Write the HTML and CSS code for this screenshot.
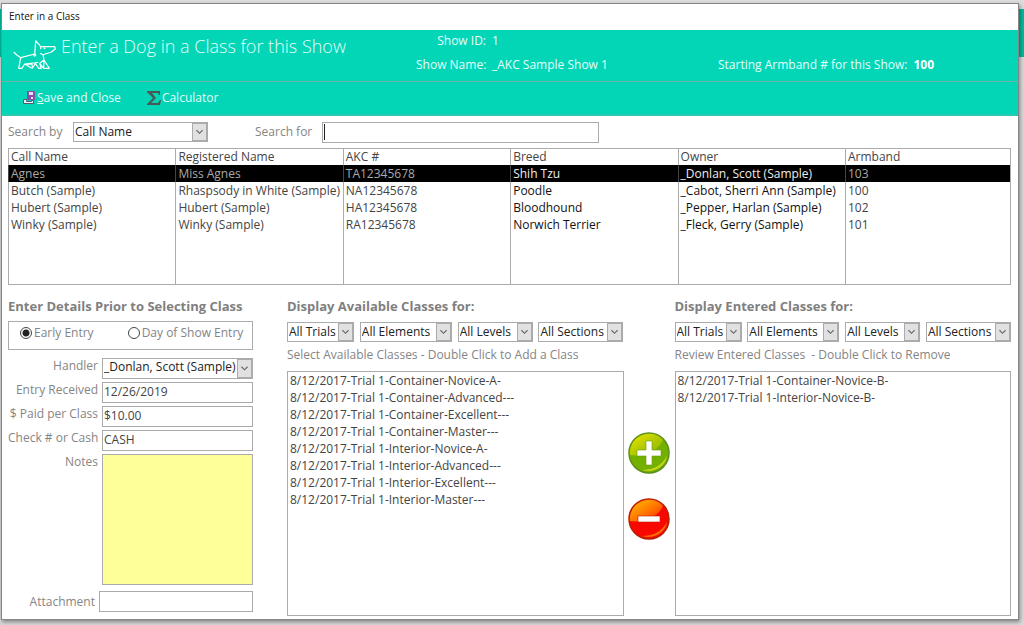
FILE: index.html
```html
<!DOCTYPE html>
<html lang="en">
<head>
  <meta charset="UTF-8">
  <title>Enter in a Class</title>
  <meta name="viewport" content="width=device-width, initial-scale=1.0">
  <link rel="stylesheet" href="styles.css">
</head>
<body>

  <svg class="defs" aria-hidden="true">
    <symbol id="arrow" viewBox="0 0 15 18">
      <path d="M4 7l3.500 3.500L11 7" fill="none" stroke="#666" stroke-width="1.300"/>
    </symbol>
  </svg>

  <div class="window">
    <div class="title-bar">Enter in a Class</div>

    <header class="banner">
      <svg class="dog" viewBox="0 0 44 32" fill="none" stroke="#fff" stroke-width="1.200" stroke-linejoin="round" stroke-linecap="round">
        <path d="M1 13.300l2.500 2.400 4.200 3L21.700 15l1-13.300 5 6h14l.7 2-4 3.300-8.300 2.700-2.600-1.200M27.700 7.700v2"/>
        <path d="M7.700 18.700l-2 10.600H9l2.700-4.300 6.600 4h1.200l-.5-4-7.300.2M19.500 29l3.200-5M11.700 25l13-1.500M30.100 15.700L31 21l5.300 8.300h-5.600l-4-5 1.600 5h-2.600l-3-4.500M30.700 29.300L31 21l-4.300 3.300"/>
        <circle cx="21.700" cy="16" r="1"/>
        <circle cx="31.500" cy="9.300" r=".4"/>
      </svg>
      <h1>Enter a Dog in a Class for this Show</h1>
      <dl class="show-info">
        <dt>Show ID:</dt><dd>1</dd>
        <dt>Show Name:</dt><dd>_AKC Sample Show 1</dd>
      </dl>
      <dl class="armband">
        <dt>Starting Armband # for this Show:</dt><dd>100</dd>
      </dl>
    </header>

    <nav class="toolbar">
      <button type="button">
        <svg width="14" height="14" viewBox="0 0 14 14">
          <path d="M5 0h8v9H5z" fill="#8350ad"/>
          <path d="M7 1h4v3H7zM9 6h2v2H9z" fill="#e9e0f2"/>
          <path d="M1.500 8.500h3v2h5v-1h2v3h-10z" fill="#dff" stroke="#5b5570"/>
        </svg>
        <span><u>S</u>ave and Close</span>
      </button>
      <button type="button">
        <svg width="14" height="14" viewBox="0 0 14 14">
          <path d="M0 0h13v4h-1l-1-2H5l4 5-5 5h7l2-3h1l-1 5H0v-1l6-6-6-6z" fill="#4d5656"/>
        </svg>
        <span>Calculator</span>
      </button>
    </nav>

    <main>
      <div class="search">
        <label for="search-by">Search by</label>
        <span class="combo">
          <select id="search-by"><option>Call Name</option></select>
          <svg><use href="#arrow"/></svg>
        </span>
        <label class="for" for="search-for">Search for</label>
        <span class="search-box"><input id="search-for" type="text"></span>
      </div>

      <table class="dogs">
        <thead>
          <tr><th>Call Name</th><th>Registered Name</th><th>AKC #</th><th>Breed</th><th>Owner</th><th class="last">Armband</th></tr>
        </thead>
        <tbody>
          <tr class="selected"><td>Agnes</td><td>Miss Agnes</td><td>TA12345678</td><td class="strong">Shih Tzu</td><td class="strong">_Donlan, Scott (Sample)</td><td>103</td></tr>
          <tr><td>Butch (Sample)</td><td>Rhaspsody in White (Sample)</td><td>NA12345678</td><td class="strong">Poodle</td><td class="strong">_Cabot, Sherri Ann (Sample)</td><td>100</td></tr>
          <tr><td>Hubert (Sample)</td><td>Hubert (Sample)</td><td>HA12345678</td><td class="strong">Bloodhound</td><td class="strong">_Pepper, Harlan (Sample)</td><td>102</td></tr>
          <tr><td>Winky (Sample)</td><td>Winky (Sample)</td><td>RA12345678</td><td class="strong">Norwich Terrier</td><td class="strong">_Fleck, Gerry (Sample)</td><td>101</td></tr>
          <tr class="rest"><td></td><td></td><td></td><td></td><td></td><td></td></tr>
        </tbody>
      </table>

      <div class="panels">
        <section class="details">
          <h2>Enter Details Prior to Selecting Class</h2>
          <div class="entry-type" role="radiogroup">
            <label><input type="radio" name="entry" checked> Early Entry</label>
            <label><input type="radio" name="entry"> Day of Show Entry</label>
          </div>
          <div class="fields">
            <label for="handler">Handler</label>
            <span class="combo">
              <select id="handler"><option>_Donlan, Scott (Sample)</option></select>
              <svg><use href="#arrow"/></svg>
            </span>
            <label for="received">Entry Received</label>
            <input id="received" type="text" value="12/26/2019">
            <label for="paid">$ Paid per Class</label>
            <input id="paid" type="text" value="$10.00">
            <label for="check">Check # or Cash</label>
            <input id="check" type="text" value="CASH">
            <label for="notes">Notes</label>
            <textarea id="notes"></textarea>
          </div>
          <div class="attachment">
            <label for="attachment">Attachment</label>
            <input id="attachment" type="text">
          </div>
        </section>

        <section class="classes">
          <h2>Display Available Classes for:</h2>
          <div class="filters">
            <span class="combo trials"><select aria-label="Trials"><option>All Trials</option></select><svg><use href="#arrow"/></svg></span>
            <span class="combo elements"><select aria-label="Elements"><option>All Elements</option></select><svg><use href="#arrow"/></svg></span>
            <span class="combo levels"><select aria-label="Levels"><option>All Levels</option></select><svg><use href="#arrow"/></svg></span>
            <span class="combo sections"><select aria-label="Sections"><option>All Sections</option></select><svg><use href="#arrow"/></svg></span>
          </div>
          <label for="available">Select Available Classes - Double Click to Add a Class</label>
          <select id="available" class="list" size="8">
            <option>8/12/2017-Trial 1-Container-Novice-A-</option>
            <option>8/12/2017-Trial 1-Container-Advanced---</option>
            <option>8/12/2017-Trial 1-Container-Excellent---</option>
            <option>8/12/2017-Trial 1-Container-Master---</option>
            <option>8/12/2017-Trial 1-Interior-Novice-A-</option>
            <option>8/12/2017-Trial 1-Interior-Advanced---</option>
            <option>8/12/2017-Trial 1-Interior-Excellent---</option>
            <option>8/12/2017-Trial 1-Interior-Master---</option>
          </select>
        </section>

        <div class="move">
          <button type="button" aria-label="Add class">
            <svg width="42" height="42" viewBox="0 0 42 42">
              <defs>
                <linearGradient id="green" x1="0" y1="0" x2="1" y2="1">
                  <stop offset="0" stop-color="#f0e800"/><stop offset=".5" stop-color="#b4ca00"/><stop offset="1" stop-color="#7fb800"/>
                </linearGradient>
              </defs>
              <circle cx="21" cy="21" r="20" fill="#74b000" stroke="#5c8f1c" stroke-width="1.500"/>
              <path d="M2 23A19 19 0 0 1 35 8C30 19 17 25 2 23z" fill="url(#green)"/>
              <path d="M14 38C26 38 34 33 39 24 38 34 26 42 14 38z" fill="#c5d51c"/>
              <path d="M18 9h6v9h9v6h-9v9h-6v-9H9v-6h9z" fill="#fff" stroke="#6a9a10" stroke-width=".6"/>
            </svg>
          </button>
          <button type="button" aria-label="Remove class">
            <svg width="42" height="42" viewBox="0 0 42 42">
              <defs>
                <linearGradient id="red" x1="0" y1="0" x2="1" y2="1">
                  <stop offset="0" stop-color="#ffc400"/><stop offset=".6" stop-color="#ff6a00"/><stop offset="1" stop-color="#f51800"/>
                </linearGradient>
              </defs>
              <circle cx="21" cy="21" r="20" fill="#f80800" stroke="#b81e08" stroke-width="1.500"/>
              <path d="M2 23A19 19 0 0 1 35 8C30 19 17 25 2 23z" fill="url(#red)"/>
              <path d="M14 38C26 38 34 33 39 24 38 34 26 42 14 38z" fill="#ff6c00"/>
              <path d="M10 18h22v6H10z" fill="#fff" stroke="#c21800" stroke-width=".6"/>
            </svg>
          </button>
        </div>

        <section class="classes">
          <h2>Display Entered Classes for:</h2>
          <div class="filters">
            <span class="combo trials"><select aria-label="Trials"><option>All Trials</option></select><svg><use href="#arrow"/></svg></span>
            <span class="combo elements"><select aria-label="Elements"><option>All Elements</option></select><svg><use href="#arrow"/></svg></span>
            <span class="combo levels"><select aria-label="Levels"><option>All Levels</option></select><svg><use href="#arrow"/></svg></span>
            <span class="combo sections"><select aria-label="Sections"><option>All Sections</option></select><svg><use href="#arrow"/></svg></span>
          </div>
          <label for="entered">Review Entered Classes &nbsp;- Double Click to Remove</label>
          <select id="entered" class="list" size="8">
            <option>8/12/2017-Trial 1-Container-Novice-B-</option>
            <option>8/12/2017-Trial 1-Interior-Novice-B-</option>
          </select>
        </section>
      </div>
    </main>
  </div>

</body>
</html>
```
FILE: styles.css
```css
:root{
  --teal:#03d5b7;--line:#ababab;--label:#858585;--text:#444
}
*{box-sizing:border-box;margin:0;padding:0}
body{
  font:12px/16px "Open Sans",sans-serif;color:var(--text);
  min-height:100vh;display:flex;padding:3px 5px 5px 1px;
  background:linear-gradient(#dcdcdc 9px,#00b89c 9px,#00b89c 57px,#d8d8d8 57px)
}
input,select,textarea,button{font:inherit;color:inherit;border-radius:0;outline:none}
.defs{position:absolute;width:0;height:0}
.window{
  flex:1;display:flex;flex-direction:column;background:#fff;
  border:1px solid #858585;box-shadow:1px 2px 4px rgba(0,0,0,.4)
}
.title-bar{height:26px;padding:4px 7px;font-size:10px;line-height:16px;color:#111}

/* Banner */
.banner{
  height:52px;display:flex;background:var(--teal);color:#e4fff9;
  border-bottom:1px solid #6db5a5
}
.dog{width:44px;height:32px;margin:9px 4px 0 11px}
.banner h1{width:355px;font-size:18px;line-height:32px;font-weight:300;white-space:nowrap}
.show-info{
  display:grid;grid-template-columns:70px 1fr;column-gap:6px;
  grid-auto-rows:24px;line-height:22px;width:302px
}
.show-info dt{text-align:right}
.armband{display:flex;gap:6px;margin-top:24px;line-height:22px}
.armband dd{font-weight:700;color:#fff}
.banner dt{white-space:nowrap}

.toolbar{
  height:34px;display:flex;gap:26px;padding:0 20px;background:var(--teal);
  border-bottom:2px solid #2cc8af
}
.toolbar button{
  display:flex;align-items:center;gap:1px;background:none;border:none;color:#e4fff9
}

main{flex:1;display:flex;flex-direction:column;padding:4px 7px 3px 6px}

/* Inputs */
input[type=text],textarea{
  border:1px solid var(--line);background:#fff;padding:0 1px 2px;width:100%;height:21px
}
.combo{position:relative;display:block;height:20px}
.combo select{
  appearance:none;width:100%;height:100%;padding:0 16px 0 1px;
  border:1px solid var(--line);background:#fff;color:#222
}
.combo svg{
  position:absolute;right:1px;top:1px;width:15px;height:calc(100% - 2px);
  background:#e1e1e1;border:1px solid var(--line);pointer-events:none
}

.search{display:flex;align-items:center;height:28px;padding-bottom:4px;color:var(--label)}
.search label{width:65px}
.search .combo{width:135px}
.search .for{width:67px;margin-left:47px}
.search-box{position:relative;display:flex;width:277px}
.search-box input{caret-color:transparent}
/* caret */
.search-box::before{
  content:"";position:absolute;left:2px;top:2px;width:1px;height:16px;background:#222
}

/* Dogs */
.dogs{
  width:100%;table-layout:fixed;border-collapse:collapse;
  border:1px solid var(--line)
}
.dogs th,.dogs td{
  height:17px;padding:0 2px;line-height:16px;text-align:left;font-weight:400;
  white-space:nowrap;border-left:1px solid var(--line)
}
.dogs th{height:16px}
.dogs .last{width:165px}
.dogs .strong{color:#111}
.dogs .selected{background:#000}
.dogs .selected td{color:#aaa;border-color:#444}
.dogs .selected .strong{color:#eee}
.dogs .rest td{height:51px}

/* Lower panels */
.panels{
  flex:1;display:grid;grid-template-columns:279px minmax(0,1fr) 51px minmax(0,1fr);
  padding-top:12px
}
h2{font-size:13px;line-height:18px;font-weight:700;color:#808080;white-space:nowrap}
.details,.classes{display:flex;flex-direction:column;color:var(--label)}
.details{padding-right:34px}
.details input,.details textarea,.list{color:var(--text)}
.entry-type{
  display:flex;gap:34px;height:29px;align-items:center;margin:6px 0 8px;
  padding:0 0 4px 11px;border:1px solid var(--line)
}
.entry-type label{display:flex;align-items:center;gap:2px;white-space:nowrap}
.entry-type input{
  appearance:none;width:12px;height:12px;border:1px solid #444;border-radius:50%;background:#fff
}
.entry-type input:checked{background:radial-gradient(#222 3px,#fff 4px)}
.fields{
  flex:1;display:grid;grid-template-columns:90px 1fr;gap:3px 4px;
  grid-template-rows:repeat(4,21px) 1fr
}
.fields label{text-align:right;white-space:nowrap}
.fields .combo{height:21px}
.fields .combo select{padding-bottom:2px}
.fields textarea{height:100%;resize:none;background:#ffff99}
.attachment{display:flex;gap:4px;margin:6px 0 4px}
.attachment label{width:87px;text-align:right;line-height:21px}
.attachment input{flex:1}

.filters{display:flex;justify-content:space-between;margin:7px 0 5px}
.trials{width:67px}
.elements{width:92px}
.levels{width:75px}
.sections{width:85px}
.list{
  flex:1;margin-top:8px;border:1px solid var(--line);background:#fff;overflow:hidden
}
.list option{padding:0 2px;min-height:0;line-height:17px}
.move{display:flex;flex-direction:column;align-items:center;gap:24px;padding-top:135px}
.move button{display:block;height:42px;background:none;border:none}
.move svg{display:block}
```
